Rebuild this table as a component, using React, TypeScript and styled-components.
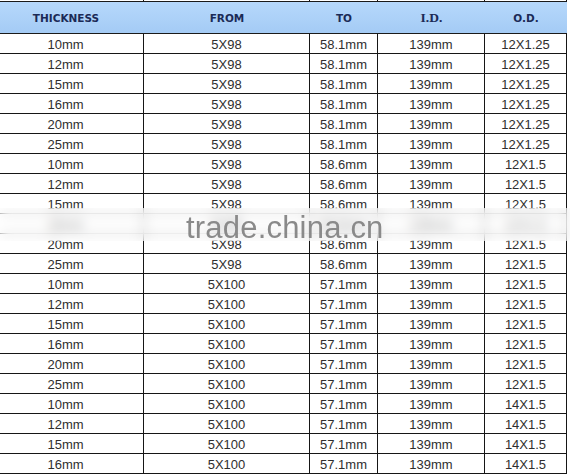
import styled, { createGlobalStyle } from 'styled-components';

const GlobalStyle = createGlobalStyle`
	html, body {
		margin: 0;
		padding: 0;
		background: #ffffff;
		overflow: hidden;
	}
`;

const COLUMN_WIDTHS = '156px 166px 68px 107px 82px';

const Page = styled.div`
	position: relative;
	width: 570px;
	height: 474px;
	overflow: hidden;
	background: #ffffff;
`;

const Table = styled.div`
	margin-left: -12px;
	width: 579px;
`;

const StubRow = styled.div`
	display: grid;
	grid-template-columns: ${COLUMN_WIDTHS};
	height: 1px;
`;

const StubCell = styled.div`
	border-right: 1px solid #141414;
`;

const HeaderRow = styled.div`
	display: grid;
	grid-template-columns: ${COLUMN_WIDTHS};
	height: 31px;
	border-top: 1px solid #1a1a1a;
	border-bottom: 1px solid #1a1a1a;
	background: linear-gradient(#b6d8fb, #a4cbf5);
`;

const HeaderCell = styled.div<{ $serif?: boolean }>`
	display: flex;
	align-items: center;
	justify-content: center;
	font-family: ${(p) =>
		p.$serif
			? '"Liberation Serif", "Times New Roman", serif'
			: '"DejaVu Sans", Verdana, sans-serif'};
	font-size: ${(p) => (p.$serif ? '13.5px' : '10.5px')};
	font-weight: 700;
	color: #1b2a56;
`;

const BodyRow = styled.div`
	display: grid;
	grid-template-columns: ${COLUMN_WIDTHS};
	height: 19px;
	border-bottom: 1px solid #161616;
`;

const BodyCell = styled.div`
	display: flex;
	align-items: center;
	justify-content: center;
	border-right: 1px solid #161616;
	font-family: 'Liberation Sans', Arial, sans-serif;
	font-size: 13px;
	color: #2e2e2e;
	padding-top: 1px;
`;

// smeared band that the photo site laid over the table
const Watermark = styled.div`
	position: absolute;
	left: 0;
	top: 208px;
	width: 570px;
	height: 33px;
	background: rgba(255, 255, 255, 0.5);
	backdrop-filter: blur(6px);
`;

const WatermarkText = styled.span`
	position: absolute;
	left: 186px;
	top: 4px;
	font-family: 'Liberation Sans', Arial, sans-serif;
	font-size: 31px;
	line-height: 31px;
	color: #8a8a8a;
	letter-spacing: 0.2px;
	white-space: nowrap;
`;

const headers: { label: string; serif?: boolean }[] = [
	{ label: 'THICKNESS' },
	{ label: 'FROM' },
	{ label: 'TO' },
	{ label: 'I.D.', serif: true },
	{ label: 'O.D.' },
];

const thicknesses = ['10mm', '12mm', '15mm', '16mm', '20mm', '25mm'];

const groups: { from: string; to: string; od: string; count: number }[] = [
	{ from: '5X98', to: '58.1mm', od: '12X1.25', count: 6 },
	{ from: '5X98', to: '58.6mm', od: '12X1.5', count: 6 },
	{ from: '5X100', to: '57.1mm', od: '12X1.5', count: 6 },
	{ from: '5X100', to: '57.1mm', od: '14X1.5', count: 4 },
];

const rows: string[][] = groups.flatMap((g) =>
	thicknesses
		.slice(0, g.count)
		.map((t) => [t, g.from, g.to, '139mm', g.od]),
);

export default function App() {
	return (
		<>
			<GlobalStyle />
			<Page>
				<Table>
					<StubRow>
						{headers.map((h) => (
							<StubCell key={h.label} />
						))}
					</StubRow>
					<HeaderRow>
						{headers.map((h) => (
							<HeaderCell key={h.label} $serif={h.serif}>
								{h.label}
							</HeaderCell>
						))}
					</HeaderRow>
					{rows.map((row, i) => (
						<BodyRow key={i}>
							{row.map((value, j) => (
								<BodyCell key={j}>{value}</BodyCell>
							))}
						</BodyRow>
					))}
				</Table>
				<Watermark>
					<WatermarkText>trade.china.cn</WatermarkText>
				</Watermark>
			</Page>
		</>
	);
}
